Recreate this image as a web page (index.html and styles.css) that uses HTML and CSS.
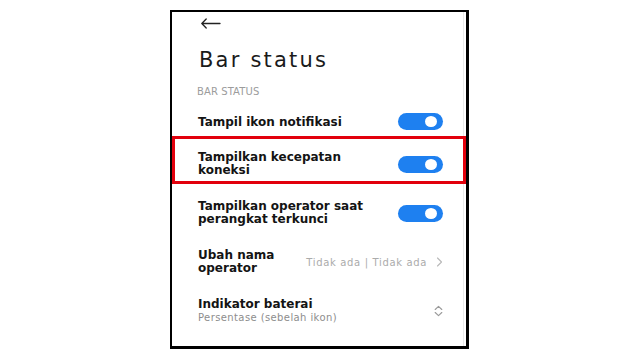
FILE: index.html
```html
<!DOCTYPE html>
<html lang="id">
<head>
<meta charset="utf-8">
<title>Bar status</title>
<link rel="stylesheet" href="styles.css">
</head>
<body>
<div class="frame">
  <div class="topbar">
    <svg class="back" width="20" height="11" viewBox="0 0 20 11"><path d="M0.8 5.5 H19 M5.2 1 L0.8 5.5 L5.2 10" fill="none" stroke="#222" stroke-width="1.3" stroke-linecap="round" stroke-linejoin="round"/></svg>
  </div>
  <h1 class="title">Bar status</h1>
  <div class="section">BAR STATUS</div>

  <div class="row r1">
    <div class="label">Tampil ikon notifikasi</div>
    <span class="switch"><span class="knob"></span></span>
  </div>

  <div class="row r2 highlight">
    <div class="label">Tampilkan kecepatan koneksi</div>
    <span class="switch"><span class="knob"></span></span>
  </div>

  <div class="row r3">
    <div class="label">Tampilkan operator saat perangkat terkunci</div>
    <span class="switch"><span class="knob"></span></span>
  </div>

  <div class="row r4">
    <div class="label narrow">Ubah nama operator</div>
    <div class="value">
      <span class="value-text">Tidak ada | Tidak ada</span>
      <svg class="chev" width="7" height="10" viewBox="0 0 7 10"><path d="M1.5 1 L5.5 5 L1.5 9" fill="none" stroke="#b8b8b8" stroke-width="1.1" stroke-linecap="round" stroke-linejoin="round"/></svg>
    </div>
  </div>

  <div class="row r5">
    <div class="stack">
      <div class="label">Indikator baterai</div>
      <div class="sub">Persentase (sebelah ikon)</div>
    </div>
    <svg class="updown" width="9" height="12" viewBox="0 0 9 12"><path d="M1.2 4.5 L4.5 1.3 L7.8 4.5 M1.2 7.5 L4.5 10.7 L7.8 7.5" fill="none" stroke="#9a9a9a" stroke-width="1.1" stroke-linecap="round" stroke-linejoin="round"/></svg>
  </div>
</div>
</body>
</html>
```

FILE: styles.css
```css
* { box-sizing: border-box; }
html, body { margin: 0; padding: 0; background: #fff; }
body {
  width: 640px;
  height: 360px;
  padding: 10px 0 0 170px;
  font-family: "DejaVu Sans", "Noto Sans", sans-serif;
  color: #151515;
}
.frame {
  width: 299px;
  height: 339px;
  border-style: solid;
  border-color: #000;
  border-width: 2px 3px 3px 2px;
  background: #fff;
  box-shadow: inset -2px 0 0 #fff, inset -3px 0 0 #e9e9e9;
  display: flex;
  flex-direction: column;
}
.topbar {
  height: 22px;
  padding-left: 29px;
  display: flex;
  align-items: center;
}
.back { display: block; }
.title {
  margin: 12px 0 0 0;
  padding-left: 27px;
  font-size: 21px;
  line-height: 28px;
  font-weight: normal;
  letter-spacing: 2.2px;
  color: #1a1a1a;
}
.section {
  margin-top: 12px;
  padding-left: 25px;
  font-size: 10px;
  line-height: 12px;
  letter-spacing: 0.1px;
  color: #9c9c9c;
}
.row {
  display: flex;
  align-items: center;
  justify-content: space-between;
  padding: 0 23px 0 26px;
}
.r1 { margin-top: 8px; height: 30px; }
.r2 { height: 48px; }
.r3 { height: 58px; }
.r4 { height: 40px; }
.r5 { height: 58px; }
.highlight {
  border: 3px solid #e2000c;
  padding: 8px 20px 0 23px;
}
.label {
  font-size: 12px;
  line-height: 13px;
  font-weight: bold;
  color: #141414;
  max-width: 182px;
}
.r1 .label { padding-top: 2px; }
.label.narrow { max-width: 96px; }
.switch {
  width: 45px;
  height: 17px;
  border-radius: 9px;
  background: #1e80f0;
  display: flex;
  align-items: center;
  justify-content: flex-end;
  padding-right: 6px;
  flex: none;
}
.knob {
  width: 12px;
  height: 11px;
  border-radius: 50%;
  background: #fff;
}
.value {
  display: flex;
  align-items: center;
  gap: 9px;
}
.value-text {
  font-size: 10px;
  letter-spacing: 0.65px;
  color: #ababab;
  white-space: nowrap;
}
.chev { display: block; }
.stack { display: flex; flex-direction: column; }
.sub {
  font-size: 10px;
  line-height: 13px;
  letter-spacing: 0.4px;
  color: #8d8d8d;
}
.updown { display: block; }
```
